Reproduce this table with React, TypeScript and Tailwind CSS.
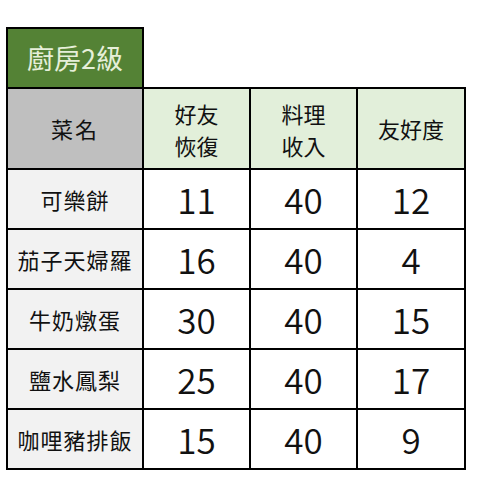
const rows = [
  { name: "可樂餅", a: "11", b: "40", c: "12" },
  { name: "茄子天婦羅", a: "16", b: "40", c: "4" },
  { name: "牛奶燉蛋", a: "30", b: "40", c: "15" },
  { name: "鹽水鳳梨", a: "25", b: "40", c: "17" },
  { name: "咖哩豬排飯", a: "15", b: "40", c: "9" },
];

const cjk = { fontFamily: '"Noto Sans CJK TC", "Noto Sans", sans-serif' };

export default function App() {
  return (
    <div className="w-[478px] h-[500px] bg-white pt-[27px] pl-[6px]" style={cjk}>
      <div className="w-[138px] h-[60px] border-2 border-b-0 border-black bg-[#548235] flex items-center justify-center text-[27px] text-[#e6efd9]">
        廚房2級
      </div>
      <div className="w-[460px] bg-black p-[2px] grid grid-cols-[134px_105px_105px_106px] grid-rows-[79px_58px_58px_58px_58px_58px] gap-[2px] text-[#111]">
        <div className="bg-[#bfbfbf] flex items-center justify-center text-[22px] tracking-[2px]">菜名</div>
        <div className="bg-[#e2efda] flex flex-col items-center justify-center text-[22px] leading-[32px]">
          <span>好友</span>
          <span>恢復</span>
        </div>
        <div className="bg-[#e2efda] flex flex-col items-center justify-center text-[22px] leading-[32px]">
          <span>料理</span>
          <span>收入</span>
        </div>
        <div className="bg-[#e2efda] flex items-center justify-center text-[22px]">友好度</div>
        {rows.map((r) => (
          <>
            <div key={r.name} className="bg-[#f2f2f2] flex items-center justify-center text-[22px] tracking-[1px]">
              {r.name}
            </div>
            <div className="bg-white flex items-center justify-center text-[35px] font-[350]">{r.a}</div>
            <div className="bg-white flex items-center justify-center text-[35px] font-[350]">{r.b}</div>
            <div className="bg-white flex items-center justify-center text-[35px] font-[350]">{r.c}</div>
          </>
        ))}
      </div>
    </div>
  );
}
